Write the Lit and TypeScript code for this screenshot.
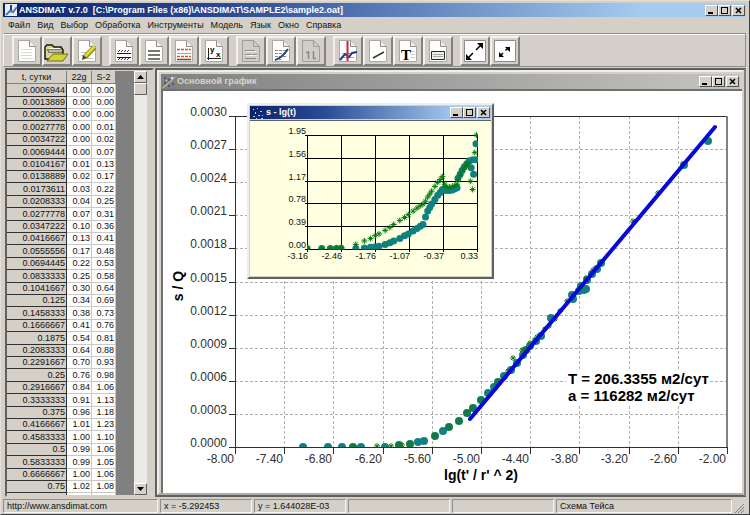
import { LitElement, html, svg, css } from "lit";
import { customElement, property } from "lit/decorators.js";
import { classMap } from "lit/directives/class-map.js";

type Point = [number, number];

const ROWS: [string, string, string][] = [
  ["0.0006944", "0.00", "0.00"], ["0.0013889", "0.00", "0.00"], ["0.0020833", "0.00", "0.00"],
  ["0.0027778", "0.00", "0.01"], ["0.0034722", "0.00", "0.02"], ["0.0069444", "0.00", "0.07"],
  ["0.0104167", "0.01", "0.13"], ["0.0138889", "0.02", "0.17"], ["0.0173611", "0.03", "0.22"],
  ["0.0208333", "0.04", "0.25"], ["0.0277778", "0.07", "0.31"], ["0.0347222", "0.10", "0.36"],
  ["0.0416667", "0.13", "0.41"], ["0.0555556", "0.17", "0.48"], ["0.0694445", "0.22", "0.53"],
  ["0.0833333", "0.25", "0.58"], ["0.1041667", "0.30", "0.64"], ["0.125", "0.34", "0.69"],
  ["0.1458333", "0.38", "0.73"], ["0.1666667", "0.41", "0.76"], ["0.1875", "0.54", "0.81"],
  ["0.2083333", "0.64", "0.88"], ["0.2291667", "0.70", "0.93"], ["0.25", "0.76", "0.98"],
  ["0.2916667", "0.84", "1.06"], ["0.3333333", "0.91", "1.13"], ["0.375", "0.96", "1.18"],
  ["0.4166667", "1.01", "1.23"], ["0.4583333", "1.00", "1.10"], ["0.5", "0.99", "1.06"],
  ["0.5833333", "0.99", "1.05"], ["0.6666667", "1.00", "1.06"], ["0.75", "1.02", "1.08"],
  ["0.8333333", "1.04", "1.10"],
];

const star = (x: number, y: number, r = 3) => svg`
  <path class="star" d="M${x - r} ${y}h${2 * r}M${x} ${y - r}v${2 * r}M${x - r + 1} ${y - r + 1}l${2 * r - 2} ${2 * r - 2}M${x - r + 1} ${y + r - 1}l${2 * r - 2} ${2 - 2 * r}"/>`;

/* ---------- toolbar icons ---------- */

const page = svg`
  <path d="M4.500 1.500h11l6 6v15h-17z" fill="#fff" stroke="#a8a8a4"/>
  <path d="M15.500 1.500v6h6" fill="#f0f0ec" stroke="#8c8c88"/>`;
const ghost = svg`
  <path d="M4.500 1.500h11l6 6v15h-17z" fill="#d0ccc6" stroke="#a09c96"/>
  <path d="M15.500 1.500v6h6" fill="none" stroke="#a09c96"/>`;

const ICONS: Record<string, unknown> = {
  "Новый": svg`${page}<path d="M7 10.500h11M7 13.500h11M7 16.500h11M7 19.500h11" stroke="#d8d8d4"/>`,
  "Открыть": svg`
    <path d="M1 8l2-2h5l2 2h7l2 3v9H1z" fill="#d8d890" stroke="#181810" stroke-width="1.500"/>
    <path d="M3 11h14M4 13h14" stroke="#202018"/><path d="M5 9.500h11M5 12h12" stroke="#fff"/>
    <path d="M3 22l6-7h15l-5 7z" fill="#d2d23a" stroke="#6a6a18"/>`,
  "Правка": svg`${page}<path d="M7 13.500h7M7 16.500h4M13 19.500h6" stroke="#c0c0bc"/>
    <path d="M20.500 8l-9.500 10" stroke="#8a8420" stroke-width="5"/>
    <path d="M20.500 7.500l-9.500 10" stroke="#e0d838" stroke-width="3"/>
    <path d="M8 21l1-5 4 3z" fill="#404030"/>`,
  "Интервал": svg`${page}<path d="M6 14.500h14M6 18.500h14" stroke="#181818"/>
    <path d="M7 13l2-2M10 13l2-2M13 13l2-2M16 13l2-2M7 21l2-2M10 21l2-2M13 21l2-2M16 21l2-2" stroke="#303030"/>`,
  "Строки": svg`${page}<path d="M7 12h12M7 16h12M7 20h12" stroke="#77777a" stroke-width="2"/>`,
  "Линии": svg`${page}<path d="M6 10.500h14M6 17.500h14" stroke="#d05a14" stroke-width="1.500" stroke-dasharray="3 1"/>
    <path d="M6 14.500h14" stroke="#a0a0a0"/><path d="M6 20.500h14" stroke="#505050" stroke-width="1.500"/>`,
  "Оси": svg`${page}<path d="M7.500 9v12M6 19.500h14" stroke="#202020"/>
    <text class="axis" x="9" y="13">y</text><text class="axis" x="15" y="18">x</text>`,
  "Слой": svg`${ghost}<path d="M7 11.500h10M7 15.500h6M14 15.500h5M7 19.500h11" stroke="#8c8882"/>
    <path d="M8 12.500h10M8 16.500h11" stroke="#f4f2ee"/>`,
  "Подбор": svg`${page}<path d="M7 11.500h11M7 14.500h12M7 17.500h12M7 20.500h6" stroke="#8a8a70" stroke-dasharray="3 1"/>
    <path d="M7 21q7-2 13-11" fill="none" stroke="#20408c" stroke-width="2"/>`,
  "Откачка": svg`${ghost}<path d="M10.500 12v8M15.500 12v8M8 13.500h3M15 19.500h3" stroke="#8c8882" stroke-width="1.500"/>`,
  "Курсор": svg`${page}<path d="M7 14.500h12M7 18.500h12" stroke="#b0a890"/>
    <path d="M5 21l5-6 4 3 3-4 5-1" fill="none" stroke="#1c3c90" stroke-width="2"/>
    <path d="M12.500 2v20" stroke="#c02830" stroke-width="2"/>`,
  "Прямая": svg`${page}<path d="M8 19l11-6" stroke="#383838" stroke-width="1.500"/>`,
  "Текст": svg`${page}<path d="M16 12.500h4M16 15.500h4M16 18.500h4" stroke="#c8c8c4"/>
    <text class="letter" x="6" y="21">T</text>`,
  "Рамка": svg`${page}<path d="M6.500 12.500h13v8h-13z" fill="#f0f0ec" stroke="#282828"/>
    <path d="M8 15.500h10M8 17.500h10" stroke="#a8a8a4"/>`,
  "Увеличить": svg`<path d="M2.500 1.500h21v21h-21z" fill="#fff" stroke="#8c8c88"/>
    <path d="M14 11l5-5M11 14l-5 5" stroke="#000" stroke-width="1.500"/>
    <path d="M15 4h6v6zM4 15v6h6z"/>`,
  "Уменьшить": svg`<path d="M2.500 1.500h21v21h-21z" fill="#fff" stroke="#8c8c88"/>
    <path d="M13.500 11.500l3-3M11 14l-3 3" stroke="#000" stroke-width="1.500"/>
    <path d="M13 8h5v5zM7 13v5h5z"/>`,
};

const GROUPS = [
  ["Новый", "Открыть", "Правка"],
  ["Интервал", "Строки", "Линии", "Оси"],
  ["Слой", "Подбор", "Откачка"],
  ["Курсор", "Прямая", "Текст", "Рамка"],
  ["Увеличить", "Уменьшить"],
];

const MENU = ["Файл", "Вид", "Выбор", "Обработка", "Инструменты", "Модель", "Язык", "Окно", "Справка"];

/* ---------- window caption ---------- */

@customElement("window-caption")
class WindowCaption extends LitElement {
  @property() label = "";
  @property() icon = "dots";
  @property({ type: Boolean }) inactive = false;

  static styles = css`
    :host { display: block; }
    .bar {
      display: flex; align-items: center; height: 100%; box-sizing: border-box; padding: 0 1px 0 2px;
      color: #fff; background: linear-gradient(90deg, #0a246a, #2a4a94 30%, #a6caf0 86%);
      font: bold 9px "Liberation Sans", Arial, sans-serif;
    }
    .inactive { background: linear-gradient(90deg, #808080, #c4c4c0); color: #d8d4cc; }
    .label { flex: 1; min-width: 0; overflow: hidden; white-space: pre; margin-left: 2px; line-height: 13px; }
    .icon { width: 12px; height: 12px; flex: none; }
    .buttons { display: flex; flex: none; }
    button {
      width: 13px; height: 11px; padding: 0; box-sizing: border-box; background: #d4d0c8;
      border: 1px solid; border-color: #fff #505050 #505050 #fff; display: grid; place-items: center;
    }
    button:last-child { margin-left: 1px; }
    button svg { width: 9px; height: 9px; display: block; }
  `;

  render() {
    const icon = this.icon === "app"
      ? svg`<path d="M0 0h12v12H0z" fill="#e8ecf4"/><path d="M6 1v6" stroke="#1c3c90" stroke-width="2"/><path d="M1 11l4-4 3 1 4-5" fill="none" stroke="#5078b8" stroke-width="2"/>`
      : this.inactive
        ? svg`<path d="M0 12L12 1" stroke="#e0e080"/><path d="M1 1h2v2H1zM5 3h2v2H5zM1 6h2v2H1zM9 7h2v2H9zM5 9h2v2H5z" fill="#405890"/><path d="M3 4h1v1H3zM8 1h2v2H8z" fill="#d8e0f0"/>`
        : svg`<path d="M1 2h1v1H1zM5 1h1v1H5zM8 4h2v1H8zM3 5h1v2H3zM1 9h2v1H1zM6 8h2v1H6zM10 8h1v1h-1zM4 11h1v1H4zM9 11h2v1H9z" fill="#b8d4f0"/>`;
    return html`<div class=${classMap({ bar: true, inactive: this.inactive })}>
      <svg class="icon" viewBox="0 0 12 12">${icon}</svg>
      <span class="label">${this.label}</span>
      <span class="buttons">
        <button aria-label="Свернуть"><svg viewBox="0 0 9 9"><path d="M1 7h5" stroke="#000" stroke-width="2"/></svg></button>
        <button aria-label="Развернуть"><svg viewBox="0 0 9 9"><path d="M1 1.500h7M1.500 1v7M7.500 1v7M1 7.500h7" stroke="#000"/></svg></button>
        <button aria-label="Закрыть"><svg viewBox="0 0 9 9"><path d="M2 2l5 5M7 2l-5 5" stroke="#000" stroke-width="1.500"/></svg></button>
      </span>
    </div>`;
  }
}

/* ---------- s - lg(t) chart ---------- */

@customElement("drawdown-chart")
class DrawdownChart extends LitElement {
  static styles = css`
    :host { display: block; background: #ffffe1; }
    svg { display: block; width: 100%; height: 100%; }
    .grid { stroke: #000; fill: none; shape-rendering: crispEdges; }
    text { font: 9px "Liberation Sans", Arial, sans-serif; text-anchor: end; fill: #101010; }
    .dot { fill: #0f8080; }
    .star { stroke: #0a7a14; fill: none; }
  `;

  render() {
    const left = 57, top = 13, width = 170, height = 114;
    const px = (v: number) => left + ((v + 3.16) / 3.49) * width;
    const py = (v: number) => top + height - (v / 1.95) * height;
    const log = ROWS.map(r => Math.log10(Number(r[0])));
    const first: Point[] = ROWS.map((r, i): Point => [log[i], Number(r[1])]).concat([
      [-0.06, 1.2], [-0.016, 1.27], [0.025, 1.34], [0.07, 1.4], [0.12, 1.45], [0.175, 1.5],
      [0.245, 1.52], [0.31, 1.52], [0.21, 1.38], [0.26, 1.27], [0.31, 1.79]]);
    const second: Point[] = ROWS.map((r, i): Point => [log[i], Number(r[2])]).concat([
      [-0.06, 1.17], [-0.016, 1.25], [0.025, 1.32], [0.07, 1.38], [0.12, 1.43], [0.155, 1.45],
      [0.195, 1.15], [0.24, 1.01], [0.285, 1.64], [0.32, 1.94]]);
    const ys = ["0.00", "0.39", "0.78", "1.17", "1.56", "1.95"];
    const xs = ["-3.16", "-2.46", "-1.76", "-1.07", "-0.37", "0.33"];
    return html`<svg viewBox="0 0 241 154" role="img" aria-label="s - lg(t)">
      <clipPath id="area"><rect x=${left} y=${top - 3} width=${width + 1} height=${height + 4}/></clipPath>
      ${ys.map((t, i) => {
        const y = Math.round(top + height - (i * height) / 5);
        return svg`<path class="grid" d="M${left - 2} ${y + 0.5}h${width + 3}"/><text x=${left - 1} y=${y - 1}>${t}</text>`;
      })}
      ${xs.map((t, i) => {
        const x = left + i * 34;
        return svg`<path class="grid" d="M${x + 0.5} ${top}v${height + 3}"/><text x=${x + 1} y=${top + height + 10}>${t}</text>`;
      })}
      <g clip-path="url(#area)">
        ${first.map(([x, y]) => svg`<circle class="dot" cx=${px(x)} cy=${py(y)} r="3.500"/>`)}
        ${second.map(([x, y]) => star(px(x), py(y)))}
      </g>
    </svg>`;
  }
}

/* ---------- main chart ---------- */

const TEAL: Point[] = [
  [140, 356], [165, 356], [179, 356], [198, 356], [222, 356], [255, 351], [261, 350], [280, 340],
  [325, 302], [331, 296], [341, 285], [348, 279], [354, 272], [360, 264], [367, 255], [373, 250],
  [378, 245], [388, 227], [410, 208], [409, 204], [416, 200], [421, 199], [423, 198], [418, 195],
  [424, 189], [429, 183], [434, 178], [438, 172], [521, 74], [545, 50],
];
const GREEN: Point[] = [
  [190, 356], [236, 354], [247, 353], [272, 345], [286, 336], [296, 330], [304, 322], [310, 317],
  [318, 309], [335, 291], [363, 259],
];
const STARS: Point[] = [
  [214, 355], [228, 355], [239, 354], [350, 267], [345, 280], [359, 259], [367, 252], [374, 246],
  [382, 238], [386, 235], [392, 228], [397, 220], [404, 210], [410, 205], [417, 197], [423, 187],
  [430, 179], [470, 130], [495, 102],
];

@customElement("theis-chart")
class TheisChart extends LitElement {
  static styles = css`
    :host { display: block; background: #fff; }
    svg { display: block; width: 100%; height: 100%; }
    .axis { stroke: #303030; shape-rendering: crispEdges; }
    .edge { stroke: #808080; stroke-width: 2; shape-rendering: crispEdges; }
    .grid { stroke: #b0b0b0; stroke-dasharray: 3 2; shape-rendering: crispEdges; }
    text { font-family: "Liberation Sans", Arial, sans-serif; }
    .tick { font-size: 12px; text-anchor: end; fill: #303030; }
    .name { font-size: 14px; font-weight: bold; text-anchor: middle; }
    .note { font-size: 15px; font-weight: bold; }
    .teal { fill: #128080; }
    .green { fill: #107a48; }
    .plate { fill: #fff; }
    .star { stroke: #1a7a1a; fill: none; }
    .fit { stroke: #0808d8; stroke-width: 4; stroke-linecap: round; }
  `;

  render() {
    const left = 72, right = 564, top = 25, bottom = 356;
    const steps = [...Array(11).keys()];
    return html`<svg viewBox="0 0 579 402" role="img" aria-label="Основной график">
      <clipPath id="plot"><rect x=${left} y=${top} width=${right - left} height=${bottom - top}/></clipPath>
      ${steps.map(i => {
        const x = Math.round(left + (i * (right - left)) / 10);
        const y = Math.round(bottom - (i * (bottom - top)) / 10);
        return svg`
          ${i > 0 && i < 10 ? svg`
            <path class="grid" d="M${x + 0.5} ${top}V${bottom}"/>
            <path class="grid" d="M${left} ${y + 0.5}H${right}"/>` : ""}
          <path class="axis" d="M${x + 0.5} ${bottom}v7M${left - 6} ${y + 0.5}h6"/>
          <text class="tick" x=${x - 1} y=${bottom + 16}>${(-8 + i * 0.6).toFixed(2)}</text>
          <text class="tick" x=${left - 8} y=${y}>${(i * 0.0003).toFixed(4)}</text>`;
      })}
      <path class="axis" d="M${left + 0.5} ${top}V${bottom}M${left} ${bottom + 0.5}H${right}M${left} ${top + 0.5}H${right}"/>
      <path class="edge" d="M${right} ${top}V${bottom}"/>
      <g clip-path="url(#plot)">
        ${TEAL.map(([x, y]) => svg`<circle class="teal" cx=${x} cy=${y} r="4"/>`)}
        ${GREEN.map(([x, y]) => svg`<circle class="green" cx=${x} cy=${y} r="4"/>`)}
        ${STARS.map(([x, y]) => star(x, y))}
      </g>
      <path class="fit" d="M307 328L552 36"/>
      <rect class="plate" x="403" y="280" width="143" height="34"/>
      <text class="note" x="405" y="293">T = 206.3355 м2/сут</text>
      <text class="note" x="405" y="310">a = 116282 м2/сут</text>
      <text class="name" x="318" y="389">lg(t' / r' ^ 2)</text>
      <text class="name" transform="translate(20 195) rotate(-90)">s / Q</text>
    </svg>`;
  }
}

/* ---------- application ---------- */

@customElement("app-root")
class AppRoot extends LitElement {
  static styles = css`
    :host { display: block; font: 9px "Liberation Sans", Arial, sans-serif; color: #101010; }
    .app {
      display: flex; flex-direction: column; box-sizing: border-box; height: 100vh; min-height: 400px;
      background: #d4d0c8; border: 1px solid; border-color: #e4e0d8 #404040 #404040 #e4e0d8;
      padding: 2px 3px 1px 2px; overflow: hidden;
    }
    .title { height: 14px; flex: none; }
    .menu { display: flex; flex: none; gap: 7px; height: 16px; padding-left: 5px; align-items: center; }
    .menu button { border: 0; padding: 0; background: none; font: inherit; color: #101010; }
    .tools {
      display: flex; flex: none; gap: 7px; height: 34px; box-sizing: border-box; padding: 2px 0 1px 8px;
      border: 1px solid; border-color: #8c8c88 #8c8c88 #8c8c88 #f4f2ee; background: #d4cfca;
      box-shadow: inset 0 1px #fff;
    }
    .group { display: flex; }
    .group button {
      width: 30px; height: 30px; padding: 0; box-sizing: border-box; background: #d4d0c8;
      border: 2px solid; border-color: #f4f2ee #84807a #84807a #f4f2ee;
    }
    .group svg { display: block; width: 26px; height: 24px; }
    .axis { font: bold 8px "Liberation Sans", Arial, sans-serif; }
    .letter { font: bold 15px "Liberation Serif", "Times New Roman", serif; }
    .work { display: flex; flex: 1; min-height: 0; margin: 1px 0 2px 2px; gap: 1px; }
    .side {
      display: flex; flex: none; width: 149px; box-sizing: border-box; overflow: hidden;
      border: 2px solid; border-color: #58585a #d4d0c8 #d4d0c8 #606060; padding-top: 1px;
    }
    .sheet { flex: none; width: 127px; background: #808080; overflow: hidden; }
    table { border-collapse: separate; border-spacing: 0; table-layout: fixed; width: 109px; background: #fff; }
    th, td { padding: 0 1px; height: 12px; box-sizing: border-box; line-height: 11px; text-align: right; font-weight: normal; border-right: 1px solid #c8c8c8; border-bottom: 1px solid #c8c8c8; overflow: hidden; }
    th { background: #d4d0c8; border-color: #303030; }
    thead th { text-align: center; height: 13px; border-color: #808080; }
    tbody tr:nth-child(5n + 1) > *, tbody tr:nth-child(5n + 4) > * { height: 13px; }
    .time { width: 60px; } .well { width: 25px; } .well2 { width: 24px; }
    .scroll { display: flex; flex-direction: column; flex: none; width: 13px; background: #eceae6; }
    .scroll button, .thumb { height: 12px; padding: 0; box-sizing: border-box; background: #d4d0c8; border: 1px solid; border-color: #fff #606060 #606060 #fff; }
    .scroll svg { display: block; margin: 0 auto; width: 7px; height: 8px; }
    .track { flex: 1; }
    .desk {
      display: flex; flex: 1; min-width: 0; box-sizing: border-box; background: #808080;
      border: 2px solid; border-color: #606060 #808080 #606060 #606060;
    }
    .window { display: flex; flex-direction: column; box-sizing: border-box; background: #d4d0c8; border: 2px solid; border-color: #f0eee8 #d4d0c8 #b0aca6 #f0eee8; }
    .main { flex: 1; min-width: 0; }
    .main > window-caption { height: 15px; margin: 2px 2px 0; flex: none; }
    .pane { position: relative; flex: 1; min-height: 0; margin-left: 2px; border-top: 2px solid #707070; border-left: 2px solid #707070; }
    .pane > theis-chart { height: 100%; }
    .float {
      position: absolute; left: 84px; top: 12px; width: 247px; height: 176px; padding: 1px;
      border-color: #f0eee8 #606060 #606060 #f0eee8;
    }
    .float > window-caption { height: 13px; flex: none; }
    .float > drawdown-chart { flex: 1; min-height: 0; border-top: 1px solid #606060; margin-top: 1px; }
    .status { display: grid; flex: none; grid-template-columns: 155px 92px 92px 102px 102px 1fr 12px; gap: 2px; height: 14px; }
    .cell { box-sizing: border-box; border: 1px solid; border-color: #8c8c88 #f8f6f2 #f8f6f2 #8c8c88; padding-left: 3px; line-height: 12px; white-space: nowrap; overflow: hidden; }
    .cell a { color: inherit; text-decoration: none; }
    .grip { width: 10px; height: 10px; align-self: end; }
  `;

  render() {
    return html`<div class="app">
      <window-caption class="title" icon="app" label="ANSDIMAT v.7.0  [C:\\Program Files (x86)\\ANSDIMAT\\SAMPLE2\\sample2.oat]"></window-caption>
      <nav class="menu">${MENU.map(m => html`<button>${m}</button>`)}</nav>
      <div class="tools" role="toolbar">
        ${GROUPS.map(g => html`<div class="group">${g.map(name => html`
          <button aria-label=${name}><svg viewBox="0 0 26 24">${ICONS[name]}</svg></button>`)}</div>`)}
      </div>
      <div class="work">
        <div class="side">
          <div class="sheet">
            <table>
              <thead><tr><th class="time">t, сутки</th><th class="well">22g</th><th class="well2">S-2</th></tr></thead>
              <tbody>${ROWS.map(([t, a, b]) => html`<tr><th>${t}</th><td>${a}</td><td>${b}</td></tr>`)}</tbody>
            </table>
          </div>
          <div class="scroll">
            <button aria-label="Вверх"><svg viewBox="0 0 7 8"><path d="M0 6h7L3.500 2z"/></svg></button>
            <div class="thumb"></div>
            <div class="track"></div>
            <button aria-label="Вниз"><svg viewBox="0 0 7 8"><path d="M0 2h7L3.500 6z"/></svg></button>
          </div>
        </div>
        <div class="desk">
          <section class="window main">
            <window-caption inactive label="Основной график"></window-caption>
            <div class="pane">
              <theis-chart></theis-chart>
              <section class="window float">
                <window-caption label="s - lg(t)"></window-caption>
                <drawdown-chart></drawdown-chart>
              </section>
            </div>
          </section>
        </div>
      </div>
      <footer class="status">
        <div class="cell"><a href="http://www.ansdimat.com">http://www.ansdimat.com</a></div>
        <div class="cell">x = -5.292453</div>
        <div class="cell">y = 1.644028E-03</div>
        <div class="cell"></div>
        <div class="cell"></div>
        <div class="cell">Схема Тейса</div>
        <svg class="grip" viewBox="0 0 10 10"><path d="M1 10l9-9M4 10l6-6M7 10l3-3" stroke="#808080"/></svg>
      </footer>
    </div>`;
  }
}
